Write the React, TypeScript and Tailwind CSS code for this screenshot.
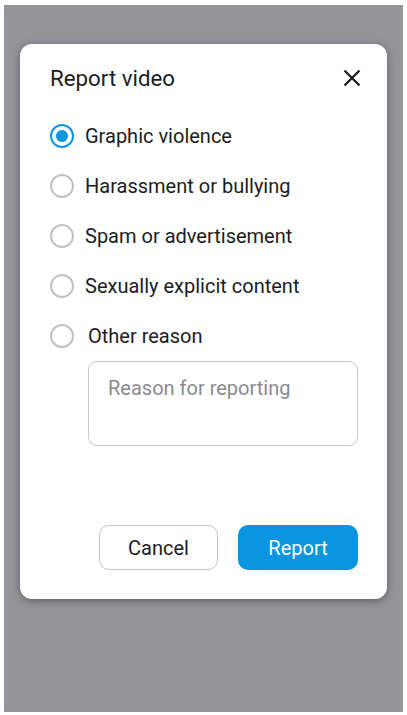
import React, { useState } from "react";

const reasons = [
  "Graphic violence",
  "Harassment or bullying",
  "Spam or advertisement",
  "Sexually explicit content",
];

function Radio({ checked }: { checked: boolean }) {
  return checked ? (
    <span className="flex h-[24px] w-[24px] shrink-0 items-center justify-center rounded-full border-[2.5px] border-[#0a95e0]">
      <span className="h-[12px] w-[12px] rounded-full bg-[#0a95e0]" />
    </span>
  ) : (
    <span className="h-[24px] w-[24px] shrink-0 rounded-full border-2 border-[#c2c2c2]" />
  );
}

export default function App() {
  const [sel] = useState(0);
  return (
    <div className="bg-white pt-[5px] pl-[4px] pr-[4px] pb-[3px]" style={{ fontFamily: "Roboto, 'Noto Sans', sans-serif" }}>
      <div className="h-[707px] bg-[#959499] pt-[39px] pl-[16px]">
        <div className="flex h-[555px] w-[367px] flex-col rounded-[12px] bg-white pl-[30px] pr-[29px] pb-[29px] pt-[19px] shadow-[0_2px_8px_rgba(0,0,0,0.35)]">
          <div className="flex h-[32px] items-center justify-between">
            <span className="text-[22.3px] text-[#1c1c1e]">Report video</span>
            <svg width="20" height="20" viewBox="0 0 20 20" className="mr-[-4px] mt-[-2px]">
              <path d="M2.5 2.5 L17.5 17.5 M17.5 2.5 L2.5 17.5" stroke="#1c1c1e" strokeWidth="2.3" strokeLinecap="butt" />
            </svg>
          </div>
          <div className="mt-[16px] flex flex-col">
            {reasons.map((r, i) => (
              <div key={r} className="flex h-[50px] items-center gap-[11px]">
                <Radio checked={sel === i} />
                <span className="text-[20px] text-[#1c1c1e]">{r}</span>
              </div>
            ))}
            <div className="flex h-[50px] items-center gap-[14px]">
              <Radio checked={false} />
              <span className="text-[20px] text-[#1c1c1e]">Other reason</span>
            </div>
            <div className="ml-[38px] h-[85px] w-[270px] rounded-[9px] border border-[#c8c8c8] px-[19px] pt-[13px] text-[20px] leading-[26px] text-[#8a8a8e]">
              Reason for reporting
            </div>
          </div>
          <div className="mt-auto flex justify-end gap-[20px]">
            <button className="h-[45px] w-[119px] rounded-[10px] border border-[#c4c4c4] bg-white text-[20px] text-[#1c1c1e]">
              Cancel
            </button>
            <button className="h-[45px] w-[120px] rounded-[10px] bg-[#0a95e0] text-[20px] text-white">
              Report
            </button>
          </div>
        </div>
      </div>
    </div>
  );
}
